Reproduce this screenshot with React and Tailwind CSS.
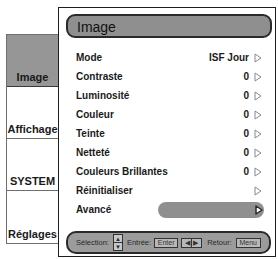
const ROWS = [
  { label: "Mode", value: "ISF Jour" },
  { label: "Contraste", value: "0" },
  { label: "Luminosité", value: "0" },
  { label: "Couleur", value: "0" },
  { label: "Teinte", value: "0" },
  { label: "Netteté", value: "0" },
  { label: "Couleurs Brillantes", value: "0" },
  { label: "Réinitialiser", value: "" },
  { label: "Avancé", value: "", active: true },
]

const TABS = ["Image", "Affichage", "SYSTEM", "Réglages"]

function Arrow({ active }) {
  return (
    <svg width="8" height="10" viewBox="0 0 8 10" className="shrink-0">
      <polygon
        points="1,1 7,5 1,9"
        fill="white"
        stroke={active ? "#2a2a2a" : "#8a8a8a"}
        strokeWidth={active ? "1.5" : "1"}
        strokeLinejoin="round"
      />
    </svg>
  )
}

function Key({ children, className = "" }) {
  return (
    <span
      className={`flex h-[10px] items-center justify-center border border-[#333] bg-[#b8b8b8] text-[7px] leading-none text-[#333] ${className}`}
    >
      {children}
    </span>
  )
}

export default function App() {
  return (
    <div className="flex h-[259px] w-[278px] overflow-hidden bg-white font-['Liberation_Sans',Arial,sans-serif] text-[#1a1a1a]">
      {/* left tabs */}
      <div className="w-[59px] shrink-0 pl-[6px] pt-[34px]">
        <div className="flex flex-col border border-[#6f6f6f]">
          {TABS.map((tab, i) => (
            <div
              key={tab}
              className={`flex h-[52px] items-end justify-center pb-[3px] text-[11px] font-bold leading-none ${
                i < TABS.length - 1 ? "border-b border-[#6f6f6f]" : ""
              } ${i === 0 ? "bg-[#969696] border-b-[#3a3a3a]" : "bg-white"}`}
            >
              {tab}
            </div>
          ))}
        </div>
      </div>

      {/* main panel */}
      <div className="relative -ml-px mt-[7px] flex h-[250px] w-[218px] shrink-0 flex-col border-[1.5px] border-[#1e1e1e] bg-white">
        <div className="ml-[7px] mt-[6px] flex h-[24px] w-[206px] items-end rounded-[9px] border-2 border-[#2a2a2a] bg-[#8f8f8f] pb-[2px] pl-[9px]">
          <span className="text-[14px] leading-none text-[#111]">Image</span>
        </div>

        <div className="mt-[10px] flex flex-col pl-[17px] pr-[11px]">
          {ROWS.map((row) => (
            <div key={row.label} className="flex h-[19px] items-center text-[10px] font-bold leading-none">
              <span className="flex-1">{row.label}</span>
              {row.active ? (
                <div className="flex h-[16px] w-[106px] items-center justify-end rounded-full bg-[#8f8f8f] pr-[1px]">
                  <Arrow active />
                </div>
              ) : (
                <div className="flex items-center gap-[5px] pr-[2px]">
                  {row.value ? <span>{row.value}</span> : null}
                  <Arrow />
                </div>
              )}
            </div>
          ))}
        </div>

        {/* footer hints */}
        <div className="mb-[2px] ml-[7px] mt-auto flex h-[23px] w-[205px] items-center rounded-[10px] border-2 border-[#2a2a2a] bg-[#9b9b9b] pl-[8px] text-[7.5px] leading-none text-[#2a2a2a]">
          <span>Sélection:</span>
          <span className="ml-[4px] flex h-[17px] w-[10px] flex-col border border-[#333] bg-[#c8c8c8]">
            <span className="flex flex-1 items-center justify-center border-b border-[#333] text-[6px]">▲</span>
            <span className="flex flex-1 items-center justify-center text-[6px]">▼</span>
          </span>
          <span className="ml-[4px]">Entrée:</span>
          <Key className="ml-[3px] w-[24px]">Enter</Key>
          <Key className="ml-[3px] w-[21px] gap-[1px] text-[6px]">
            <span>◀</span>
            <span className="h-full w-px bg-[#333]" />
            <span>▶</span>
          </Key>
          <span className="ml-[5px]">Retour:</span>
          <Key className="ml-[4px] w-[25px]">Menu</Key>
        </div>
      </div>
    </div>
  )
}
